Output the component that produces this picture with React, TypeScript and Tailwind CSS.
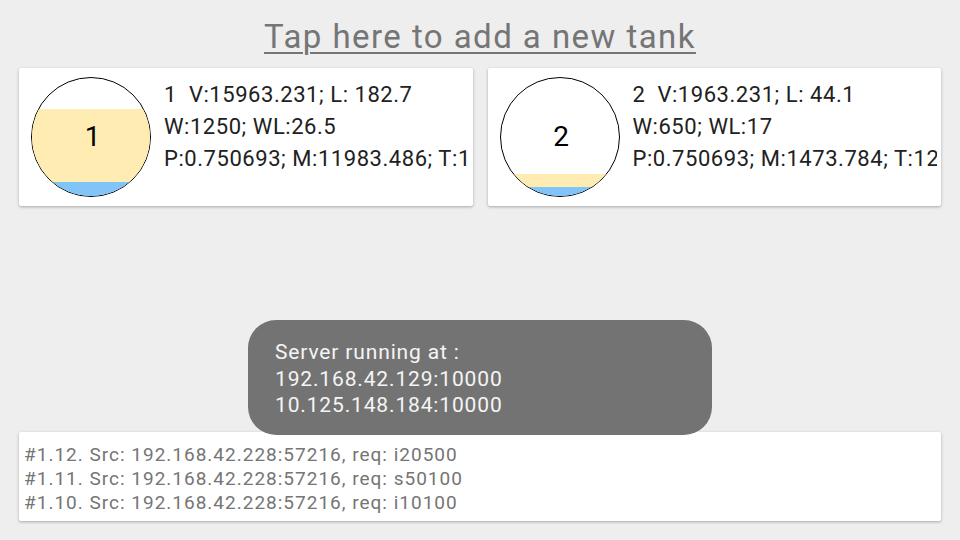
import React from "react";

type Tank = {
    id: number;
    lines: string[];
    oil: number;
    water: number;
};

const tanks: Tank[] = [
    {
        id: 1,
        lines: ["1  V:15963.231; L: 182.7", "W:1250; WL:26.5", "P:0.750693; M:11983.486; T:15"],
        oil: 73,
        water: 14,
    },
    {
        id: 2,
        lines: ["2  V:1963.231; L: 44.1", "W:650; WL:17", "P:0.750693; M:1473.784; T:12"],
        oil: 13,
        water: 9,
    },
];

const logs = [
    "#1.12. Src: 192.168.42.228:57216, req: i20500",
    "#1.11. Src: 192.168.42.228:57216, req: s50100",
    "#1.10. Src: 192.168.42.228:57216, req: i10100",
];

const TankCard = ({ tank }: { tank: Tank }) => (
    <div className="flex h-[138px] overflow-hidden rounded-[2px] bg-white pl-[12px] pr-[4px] shadow-[0_1px_3px_rgba(0,0,0,0.3)]">
        <div className="relative mt-[9px] flex h-[120px] w-[120px] shrink-0 flex-col justify-end overflow-hidden rounded-full border border-black bg-white">
            <div className="bg-[#ffecb3]" style={{ height: tank.oil }} />
            <div className="bg-[#81c4f8]" style={{ height: tank.water }} />
            <div className="absolute inset-0 flex items-center justify-center pl-[3px] text-[28px] text-black">
                {tank.id}
            </div>
        </div>
        <div className="ml-[13px] mt-[11px] min-w-0 overflow-hidden whitespace-nowrap text-[22px] leading-[32px] tracking-[0.55px] text-[#212121]">
            {tank.lines.map((l, i) => (
                <div key={i} className="whitespace-pre">
                    {l}
                </div>
            ))}
        </div>
    </div>
);

export default function App() {
    return (
        <div className="relative flex h-[540px] w-[960px] flex-col bg-[#eeeeee] font-['Roboto',sans-serif]">
            <div className="flex h-[68px] items-start justify-center pt-[15px]">
                <span className="text-[33px] leading-[44px] tracking-[1.45px] text-[#757575] underline decoration-[2px] underline-offset-[4px]">
                    Tap here to add a new tank
                </span>
            </div>

            <div className="grid grid-cols-2 gap-[15px] px-[19px]">
                {tanks.map((t) => (
                    <TankCard key={t.id} tank={t} />
                ))}
            </div>

            <div className="flex-1" />

            <div className="mx-[19px] mb-[19px] h-[89px] rounded-[2px] bg-white px-[5px] pt-[11px] text-[19px] leading-[24px] tracking-[1px] text-[#757575] shadow-[0_1px_3px_rgba(0,0,0,0.3)]">
                {logs.map((l, i) => (
                    <div key={i}>{l}</div>
                ))}
            </div>

            <div className="absolute left-[248px] top-[320px] h-[115px] w-[464px] rounded-[28px] bg-[#737373] pl-[27px] pt-[19px] text-[21px] leading-[26.5px] tracking-[0.85px] text-[#f5f5f5]">
                <div>Server running at :</div>
                <div>192.168.42.129:10000</div>
                <div>10.125.148.184:10000</div>
            </div>
        </div>
    );
}
